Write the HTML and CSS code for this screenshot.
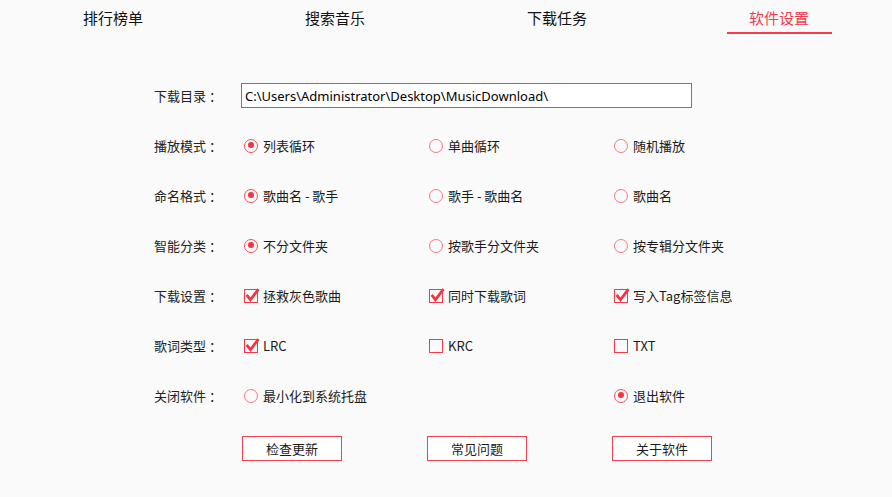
FILE: index.html
```html
<!DOCTYPE html>
<html lang="zh-CN">
<head>
    <meta charset="UTF-8">
    <meta name="viewport" content="width=device-width, initial-scale=1.0">
    <title>软件设置</title>
    <link rel="stylesheet" href="styles.css">
</head>
<body>
    <nav class="tabs">
        <div class="tab-col"><span class="tab">排行榜单</span></div>
        <div class="tab-col"><span class="tab">搜索音乐</span></div>
        <div class="tab-col"><span class="tab">下载任务</span></div>
        <div class="tab-col"><span class="tab active">软件设置</span></div>
    </nav>

    <form class="settings">
        <div class="row">
            <label class="row-label" for="dir">下载目录 ：</label>
            <input type="text" id="dir" class="path" value="C:\Users\Administrator\Desktop\MusicDownload\">
        </div>

        <div class="row">
            <span class="row-label">播放模式 ：</span>
            <label class="opt"><span class="radio checked"></span>列表循环</label>
            <label class="opt"><span class="radio"></span>单曲循环</label>
            <label class="opt"><span class="radio"></span>随机播放</label>
        </div>

        <div class="row">
            <span class="row-label">命名格式 ：</span>
            <label class="opt"><span class="radio checked"></span>歌曲名 - 歌手</label>
            <label class="opt"><span class="radio"></span>歌手 - 歌曲名</label>
            <label class="opt"><span class="radio"></span>歌曲名</label>
        </div>

        <div class="row">
            <span class="row-label">智能分类 ：</span>
            <label class="opt"><span class="radio checked"></span>不分文件夹</label>
            <label class="opt"><span class="radio"></span>按歌手分文件夹</label>
            <label class="opt"><span class="radio"></span>按专辑分文件夹</label>
        </div>

        <div class="row">
            <span class="row-label">下载设置 ：</span>
            <label class="opt"><span class="check"><svg viewBox="0 0 14 14"><path d="M2.5 6.5 L6 11 L13.5 1"/></svg></span>拯救灰色歌曲</label>
            <label class="opt"><span class="check"><svg viewBox="0 0 14 14"><path d="M2.5 6.5 L6 11 L13.5 1"/></svg></span>同时下载歌词</label>
            <label class="opt"><span class="check"><svg viewBox="0 0 14 14"><path d="M2.5 6.5 L6 11 L13.5 1"/></svg></span>写入Tag标签信息</label>
        </div>

        <div class="row">
            <span class="row-label">歌词类型 ：</span>
            <label class="opt"><span class="check"><svg viewBox="0 0 14 14"><path d="M2.5 6.5 L6 11 L13.5 1"/></svg></span>LRC</label>
            <label class="opt"><span class="check"></span>KRC</label>
            <label class="opt"><span class="check"></span>TXT</label>
        </div>

        <div class="row">
            <span class="row-label">关闭软件 ：</span>
            <label class="opt"><span class="radio"></span>最小化到系统托盘</label>
            <span class="opt"></span>
            <label class="opt"><span class="radio checked"></span>退出软件</label>
        </div>

        <div class="row buttons">
            <span class="row-label"></span>
            <div class="btn-col"><button type="button">检查更新</button></div>
            <div class="btn-col"><button type="button">常见问题</button></div>
            <div class="btn-col"><button type="button">关于软件</button></div>
        </div>
    </form>
</body>
</html>
```

FILE: styles.css
```css
body {
    margin: 0;
    background-color: #fafafa;
    font-family: "Noto Sans CJK SC", "Noto Sans", sans-serif;
    font-size: 13px;
    color: #1a1a1a;
}

.tabs {
    display: flex;
    padding-left: 2px;
}

.tab-col {
    width: 222px;
    text-align: center;
}

.tab {
    display: inline-block;
    width: 105px;
    padding: 8px 0 4px;
    line-height: 20px;
    font-size: 15px;
    color: #111;
    border-bottom: 2px solid transparent;
}

.tab.active {
    color: #f53b4c;
    border-bottom-color: #f53b4c;
}

.settings {
    margin: 0 0 0 154px;
    padding-top: 49px;
}

.row {
    display: flex;
    align-items: center;
    height: 25px;
    margin-bottom: 25px;
}

.row-label {
    width: 87px;
    flex-shrink: 0;
    white-space: nowrap;
    color: #222;
}

.path {
    width: 451px;
    height: 25px;
    box-sizing: border-box;
    border: 1px solid #f0434f;
    background: #fff;
    padding: 0 3px;
    font-family: "Noto Sans", "Noto Sans CJK SC", sans-serif;
    font-size: 13px;
    color: #000;
    outline: none;
}

.opt {
    display: flex;
    align-items: center;
    width: 185px;
    margin-left: 3px;
    margin-right: -3px;
}

.radio,
.check {
    width: 14px;
    height: 14px;
    box-sizing: border-box;
    flex-shrink: 0;
    margin-right: 5px;
    position: relative;
}

.radio {
    border: 1.5px solid #f77782;
    border-radius: 50%;
}

.radio.checked {
    border-color: #f2505c;
}

.radio.checked::after {
    content: "";
    position: absolute;
    left: 2.5px;
    top: 2.5px;
    width: 6px;
    height: 6px;
    border-radius: 50%;
    background: #f5333f;
}

.check {
    border: 1.5px solid #f5394a;
}

.check svg {
    position: absolute;
    left: -1px;
    top: -2px;
    width: 15px;
    height: 15px;
    overflow: visible;
}

.check path {
    fill: none;
    stroke: #f5333f;
    stroke-width: 2.6;
}

.buttons {
    margin-top: 28px;
}

.btn-col {
    width: 185px;
    padding-left: 1px;
    margin-right: -1px;
}

button {
    width: 100px;
    height: 25px;
    border: 1px solid #f0434f;
    background: #fff;
    font-family: "Noto Sans CJK SC", sans-serif;
    font-size: 13px;
    color: #1a1a1a;
    padding: 0;
}
```
